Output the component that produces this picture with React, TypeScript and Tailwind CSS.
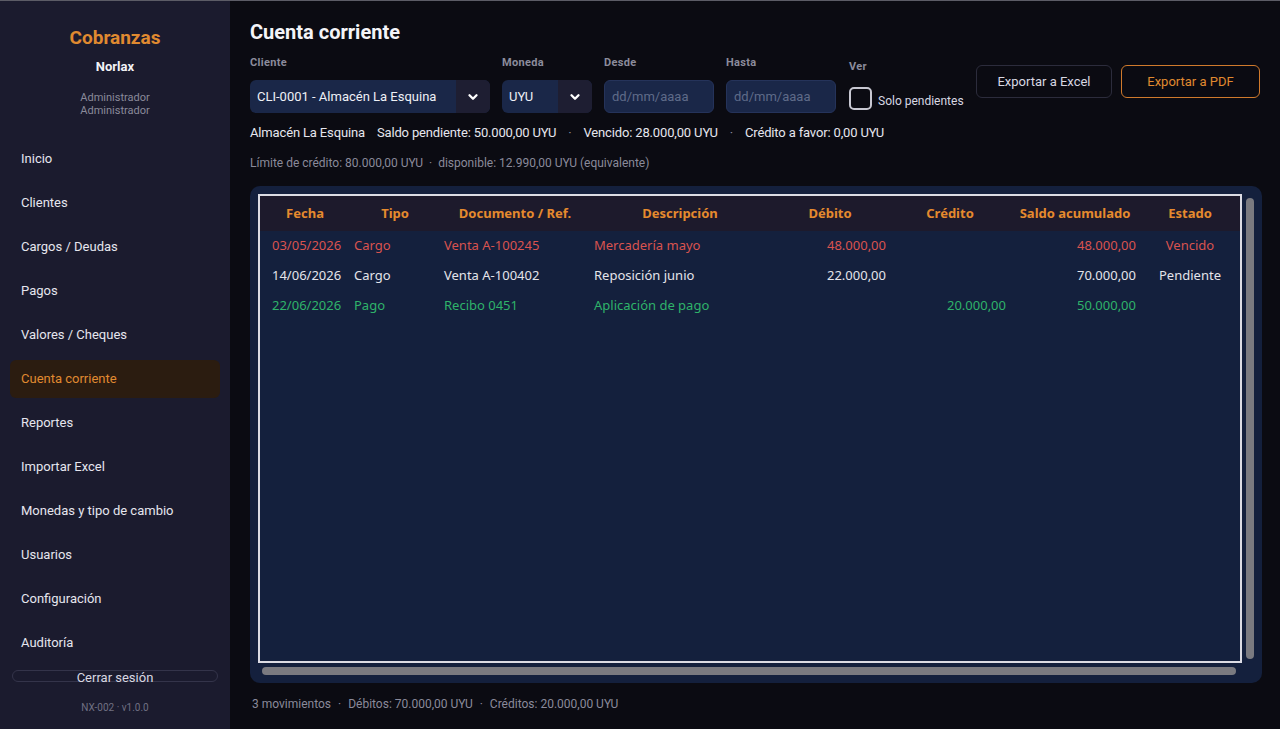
import { ChevronDown } from "lucide-react";

const navItems = [
  "Inicio",
  "Clientes",
  "Cargos / Deudas",
  "Pagos",
  "Valores / Cheques",
  "Cuenta corriente",
  "Reportes",
  "Importar Excel",
  "Monedas y tipo de cambio",
  "Usuarios",
  "Configuración",
  "Auditoría",
];

type Row = {
  fecha: string;
  tipo: string;
  doc: string;
  desc: string;
  debito: string;
  credito: string;
  saldo: string;
  estado: string;
  color: string;
};

const rows: Row[] = [
  {
    fecha: "03/05/2026",
    tipo: "Cargo",
    doc: "Venta A-100245",
    desc: "Mercadería mayo",
    debito: "48.000,00",
    credito: "",
    saldo: "48.000,00",
    estado: "Vencido",
    color: "text-[#d9534f]",
  },
  {
    fecha: "14/06/2026",
    tipo: "Cargo",
    doc: "Venta A-100402",
    desc: "Reposición junio",
    debito: "22.000,00",
    credito: "",
    saldo: "70.000,00",
    estado: "Pendiente",
    color: "text-[#e4e4ea]",
  },
  {
    fecha: "22/06/2026",
    tipo: "Pago",
    doc: "Recibo 0451",
    desc: "Aplicación de pago",
    debito: "",
    credito: "20.000,00",
    saldo: "50.000,00",
    estado: "",
    color: "text-[#2fb36a]",
  },
];

const cols = "grid grid-cols-[90px_90px_150px_180px_120px_120px_130px_100px]";

const Sidebar = () => (
  <aside className="w-[230px] shrink-0 bg-[#1b1b2e] flex flex-col items-stretch">
    <div className="pt-[25px] flex flex-col items-center">
      <h1 className="text-[19px] leading-[24px] font-bold text-[#e08a30]">Cobranzas</h1>
      <p className="mt-[9px] text-[13px] leading-[16px] font-bold text-[#f2f2f6]">Norlax</p>
      <p className="mt-[16px] text-[11px] leading-[13px] text-[#8a8a9a] text-center">
        Administrador
        <br />
        Administrador
      </p>
    </div>
    <nav className="mt-[23px] px-[10px] flex flex-col gap-[6px]">
      {navItems.map((item) => {
        const active = item === "Cuenta corriente";
        return (
          <div
            key={item}
            className={`h-[38px] flex items-center px-[11px] rounded-[6px] text-[13px] ${
              active ? "bg-[#2b1c10] text-[#e08a30]" : "text-[#e6e6ee]"
            }`}
          >
            {item}
          </div>
        );
      })}
    </nav>
    <div className="mt-[8px] mx-[12px] h-[12px] border border-[#34344a] rounded-[6px] flex justify-center">
      <span className="text-[13px] leading-[14px] text-[#d8d8e2]">Cerrar sesión</span>
    </div>
    <p className="mt-[18px] text-center text-[10px] text-[#707082]">NX-002 · v1.0.0</p>
  </aside>
);

const Select = ({ value, width }: { value: string; width: string }) => (
  <div className={`${width} h-[33px] flex rounded-[6px] overflow-hidden bg-[#1a2748]`}>
    <div className="flex-1 flex items-center px-[7px] text-[13px] text-[#eef0f6]">{value}</div>
    <div className="w-[34px] bg-[#1e1e32] flex items-center justify-center text-white">
      <ChevronDown size={14} strokeWidth={4} />
    </div>
  </div>
);

const DateInput = () => (
  <div className="w-[110px] h-[33px] rounded-[6px] bg-[#1a2748] border border-[#25335a] flex items-center px-[7px] text-[13px] text-[#5f6b88]">
    dd/mm/aaaa
  </div>
);

const Label = ({ children }: { children: string }) => (
  <p className="text-[11px] leading-[14px] font-bold text-[#8c8c9c] tracking-[0.3px]">{children}</p>
);

const Dot = () => <span className="text-[#8a8a9a]">·</span>;

export default function App() {
  return (
    <div className="w-[1280px] h-[729px] flex border-t border-[#5c5c66] bg-[#0b0b12] overflow-hidden font-['Roboto',sans-serif]">
      <Sidebar />
      <main className="flex-1 pl-[20px] pr-[20px] pt-[19px] flex flex-col">
        <h2 className="text-[20px] leading-[24px] font-bold text-[#f4f4f8]">Cuenta corriente</h2>
        <div className="mt-[12px] flex items-start">
          <div className="flex flex-col gap-[10px]">
            <Label>Cliente</Label>
            <Select value="CLI-0001 - Almacén La Esquina" width="w-[240px]" />
          </div>
          <div className="ml-[12px] flex flex-col gap-[10px]">
            <Label>Moneda</Label>
            <Select value="UYU" width="w-[90px]" />
          </div>
          <div className="ml-[12px] flex flex-col gap-[10px]">
            <Label>Desde</Label>
            <DateInput />
          </div>
          <div className="ml-[12px] flex flex-col gap-[10px]">
            <Label>Hasta</Label>
            <DateInput />
          </div>
          <div className="ml-[13px] pt-[4px] flex flex-col gap-[12px]">
            <Label>Ver</Label>
            <div className="flex items-center gap-[6px]">
              <div className="w-[23px] h-[23px] rounded-[5px] border-2 border-[#c8c8d2]" />
              <span className="text-[12px] text-[#d8d8e2] pt-[6px]">Solo pendientes</span>
            </div>
          </div>
          <div className="ml-auto pt-[9px] pr-[2px] flex gap-[9px]">
            <button className="w-[136px] h-[33px] rounded-[6px] border border-[#2c2c3c] text-[13px] text-[#d8d8e2]">
              Exportar a Excel
            </button>
            <button className="w-[139px] h-[33px] rounded-[6px] border border-[#d07a2c] text-[13px] text-[#e08a30]">
              Exportar a PDF
            </button>
          </div>
        </div>
        <div className="mt-[12px] flex gap-[12px] text-[13px] leading-[16px] text-[#e6e6ee] tracking-[-0.15px]">
          <span>Almacén La Esquina</span>
          <span>Saldo pendiente: 50.000,00 UYU</span>
          <Dot />
          <span>Vencido: 28.000,00 UYU</span>
          <Dot />
          <span>Crédito a favor: 0,00 UYU</span>
        </div>
        <p className="mt-[14px] flex gap-[6px] text-[12px] leading-[16px] text-[#8a8a9a]">
          <span>Límite de crédito: 80.000,00 UYU</span>
          <span>·</span>
          <span>disponible: 12.990,00 UYU (equivalente)</span>
        </p>
        <div className="mt-[15px] h-[497px] rounded-[10px] bg-[#14203d] p-[8px] flex flex-col">
          <div className="flex flex-1 gap-[4px] min-h-0">
            <div className="flex-1 border-2 border-[#dcdce4] bg-[#14203d] font-['Noto_Sans',sans-serif] text-[13px]">
              <div className={`${cols} h-[35px] items-center bg-[#1d1a2c] font-bold text-[#e58a2e]`}>
                <span className="text-center">Fecha</span>
                <span className="text-center">Tipo</span>
                <span className="text-center">Documento / Ref.</span>
                <span className="text-center">Descripción</span>
                <span className="text-center">Débito</span>
                <span className="text-center">Crédito</span>
                <span className="text-center">Saldo acumulado</span>
                <span className="text-center">Estado</span>
              </div>
              {rows.map((r) => (
                <div key={r.fecha} className={`${cols} h-[30px] items-center ${r.color}`}>
                  <span className="pl-[12px]">{r.fecha}</span>
                  <span className="pl-[4px]">{r.tipo}</span>
                  <span className="pl-[4px]">{r.doc}</span>
                  <span className="pl-[4px]">{r.desc}</span>
                  <span className="text-right pr-[4px]">{r.debito}</span>
                  <span className="text-right pr-[4px]">{r.credito}</span>
                  <span className="text-right pr-[4px]">{r.saldo}</span>
                  <span className="text-center">{r.estado}</span>
                </div>
              ))}
            </div>
            <div className="w-[8px] my-[4px] rounded-full bg-[#7a7a80]" />
          </div>
          <div className="mt-[4px] ml-[4px] mr-[18px] h-[8px] rounded-full bg-[#7a7a80]" />
        </div>
        <p className="mt-[12px] pl-[2px] flex gap-[7px] text-[12px] text-[#8a8a9a]">
          <span>3 movimientos</span>
          <span>·</span>
          <span>Débitos: 70.000,00 UYU</span>
          <span>·</span>
          <span>Créditos: 20.000,00 UYU</span>
        </p>
      </main>
    </div>
  );
}
